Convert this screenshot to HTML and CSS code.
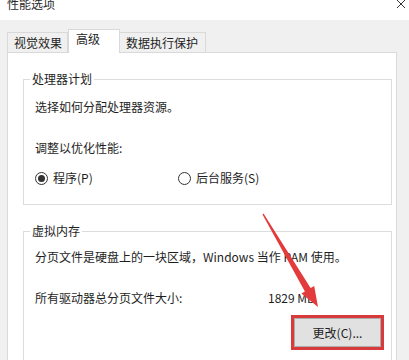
FILE: index.html
```html
<!DOCTYPE html>
<html lang="zh-CN">
<head>
    <meta charset="UTF-8">
    <meta name="viewport" content="width=device-width, initial-scale=1.0">
    <title>性能选项</title>
    <link rel="stylesheet" href="styles.css">
</head>
<body>
    <div class="titlebar">
        <span class="title">性能选项</span>
        <svg class="close" width="10" height="10" viewBox="0 0 10 10">
            <path d="M1 0 L9 8 M9 0 L1 8" stroke="#333" stroke-width="1" fill="none"/>
        </svg>
    </div>

    <div class="tabs">
        <div class="tab">视觉效果</div>
        <div class="tab active">高级</div>
        <div class="tab">数据执行保护</div>
    </div>

    <div class="panel">
        <fieldset class="group">
            <legend>处理器计划</legend>
            <p class="line">选择如何分配处理器资源。</p>
            <p class="line gap">调整以优化性能:</p>
            <div class="radios">
                <label class="radio"><span class="dot checked"></span>程序(P)</label>
                <label class="radio"><span class="dot"></span>后台服务(S)</label>
            </div>
        </fieldset>

        <fieldset class="group memory">
            <legend>虚拟内存</legend>
            <p class="line">分页文件是硬盘上的一块区域，Windows 当作 RAM 使用。</p>
            <div class="size-row">
                <span>所有驱动器总分页文件大小:</span>
                <span>1829 MB</span>
            </div>
            <div class="actions">
                <span class="highlight"><button class="btn">更改(C)...</button></span>
            </div>
        </fieldset>
    </div>

    <!-- annotation arrow on top of the dialog -->
    <svg class="arrow" width="409" height="360" viewBox="0 0 409 360">
        <polygon fill="#e33b3b" points="262.5,214.4 263.5,213.6 310.6,288.1 314.2,286.0 318,307 301.4,293.6 304.9,291.5"/>
    </svg>
</body>
</html>
```

FILE: styles.css
```css
body {
    margin: 0;
    padding: 0;
    background-color: #f0f0f0;
    font-family: "Noto Sans CJK SC", "Microsoft YaHei", sans-serif;
    font-size: 12px;
    line-height: 16px;
    color: #1e1e1e;
    width: 409px;
    height: 360px;
    overflow: hidden;
    position: relative;
}

.titlebar {
    height: 20px;
    background-color: #ffffff;
    display: flex;
    justify-content: space-between;
    align-items: flex-start;
    padding: 0 3px 0 7px;
    box-sizing: border-box;
}

.title {
    margin-top: -4px;
    color: #2a2a2a;
}

.tabs {
    display: flex;
    align-items: flex-end;
    height: 32px;
    padding-left: 7px;
    position: relative;
    z-index: 1;
}

.tab {
    height: 19px;
    border: 1px solid #d9d9d9;
    border-bottom: none;
    background-color: #f0f0f0;
    line-height: 19px;
    padding: 0 4px 0 6px;
}

.tab:first-child {
    width: 49px;
}

.tab + .tab {
    border-left: none;
}

.tab.active {
    height: 23px;
    width: 43px;
    margin-bottom: -1px;
    background-color: #ffffff;
    line-height: 18px;
    padding: 0 0 0 7px;
    border-left: 1px solid #d9d9d9;
}

.tab.active + .tab {
    border-left: none;
    width: 75px;
}

.panel {
    margin-left: 7px;
    width: 390px;
    height: 308px;
    overflow: hidden;
    background-color: #ffffff;
    border: 1px solid #d9d9d9;
    border-bottom: none;
    padding: 18px 4px 0 15px;
    box-sizing: border-box;
}

.group {
    margin: 0;
    padding: 12px 7px 18px 11px;
    border: 1px solid #dcdcdc;
    min-width: 0;
}

.group legend {
    padding: 0 2px;
    margin-left: -5px;
    line-height: 16px;
}

.line {
    margin: 0;
}

.line.gap {
    margin-top: 25px;
}

.radios {
    display: grid;
    grid-template-columns: 143px auto;
    margin-top: 14px;
}

.radio {
    display: flex;
    align-items: center;
    gap: 5px;
}

.dot {
    width: 11px;
    height: 11px;
    border: 1px solid #333333;
    border-radius: 50%;
    display: flex;
    justify-content: center;
    align-items: center;
}

.dot.checked::after {
    content: "";
    width: 7px;
    height: 7px;
    border-radius: 50%;
    background-color: #333333;
}

.memory {
    margin-top: 18px;
    padding-top: 10px;
    border-bottom: none;
    padding-bottom: 40px;
}

.size-row {
    display: grid;
    grid-template-columns: 233px auto;
    margin-top: 25px;
}

.actions {
    display: flex;
    justify-content: flex-end;
    margin-top: 9px;
}

.highlight {
    display: inline-flex;
    border: 3px solid #d93a3c;
}

.btn {
    width: 87px;
    height: 29px;
    font-family: inherit;
    font-size: 12px;
    color: #1e1e1e;
    background-color: #e1e1e1;
    border: 1px solid #adadad;
    padding: 0;
}

.arrow {
    position: absolute;
    left: 0;
    top: 0;
    pointer-events: none;
}
```
